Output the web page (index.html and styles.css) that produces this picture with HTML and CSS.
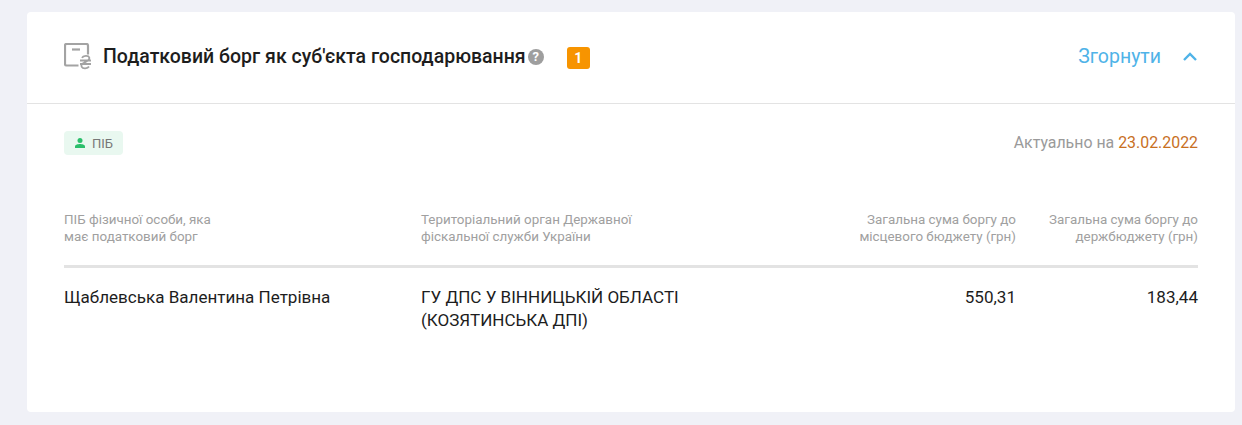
FILE: index.html
```html
<!DOCTYPE html>
<html lang="uk">
<head>
<meta charset="utf-8">
<title>Податковий борг</title>
<link rel="stylesheet" href="styles.css">
</head>
<body>
<section class="card">
  <header class="card-head">
    <div class="title-group">
      <svg class="doc-icon" width="28" height="27" viewBox="0 0 28 27" fill="none">
        <path d="M14.500 22.500H2.500A1.500 1.500 0 0 1 1 21V2.500A1.500 1.500 0 0 1 2.500 1h20A1.500 1.500 0 0 1 24 2.500V11.500" stroke="#a3a3a3" stroke-width="2.200"/>
        <path d="M8 6.500h8" stroke="#a3a3a3" stroke-width="2.200"/>
        <path d="M18 14.800c1-2.300 6.500-2.800 7.300-.2.700 2.400-2.700 3.900-4.800 4.900-2.100 1-3.900 2.300-2.800 4.400 1 2 6 1.800 7.300-.4M16 17.500h11M16 21h11" stroke="#a3a3a3" stroke-width="1.800"/>
      </svg>
      <h2 class="title">Податковий борг як суб'єкта господарювання</h2>
      <span class="help">?</span>
      <span class="count">1</span>
    </div>
    <button class="toggle">Згорнути
      <svg width="14" height="9" viewBox="0 0 14 9" fill="none"><path d="M1 8l6-6 6 6" stroke="#4fb3e8" stroke-width="2.400"/></svg>
    </button>
  </header>
  <div class="card-body">
    <div class="meta">
      <span class="tag">
        <svg width="10" height="10" viewBox="0 0 10 10"><circle cx="5" cy="2.600" r="2.500" fill="#2bbf6b"/><path d="M0 10V8.300C0 6.800 3 6 5 6s5 .8 5 2.300V10z" fill="#2bbf6b"/></svg>
        ПІБ
      </span>
      <span class="date">Актуально на <b>23.02.2022</b></span>
    </div>
    <div class="table">
      <div class="row head">
        <div>ПІБ фізичної особи, яка<br>має податковий борг</div>
        <div>Територіальний орган Державної<br>фіскальної служби України</div>
        <div class="num">Загальна сума боргу до<br>місцевого бюджету (грн)</div>
        <div class="num">Загальна сума боргу до<br>держбюджету (грн)</div>
      </div>
      <div class="row data">
        <div>Щаблевська Валентина Петрівна</div>
        <div>ГУ ДПС У ВІННИЦЬКІЙ ОБЛАСТІ<br>(КОЗЯТИНСЬКА ДПІ)</div>
        <div class="num">550,31</div>
        <div class="num">183,44</div>
      </div>
    </div>
  </div>
</section>
</body>
</html>
```
FILE: styles.css
```css
* { box-sizing: border-box; }
html, body { margin: 0; }
body {
  background: #f0f1f7;
  padding: 12px 7px 13px 27px;
  font-family: Roboto, "Liberation Sans", sans-serif;
  color: #1d1d1d;
}
.card {
  background: #fff;
  border-radius: 4px;
  height: 400px;
}
.card-head {
  height: 92px;
  border-bottom: 1px solid #e3e3e3;
  padding: 0 37px 2px;
  display: flex;
  align-items: center;
  justify-content: space-between;
}
.title-group { display: flex; align-items: center; }
.doc-icon { margin-right: 11px; }
.title { margin: 0; font-size: 19.500px; font-weight: 500; line-height: 24px; color: #1d1d1d; }
.help {
  width: 16px; height: 16px; border-radius: 50%;
  background: #9e9e9e; color: #fff;
  font-size: 13px; font-weight: 700; line-height: 16px; text-align: center;
  margin-left: 2px;
}
.count {
  margin: 2px 0 0 23px;
  width: 23px; height: 22px; border-radius: 3px;
  background: #f79400; color: #fff;
  font-size: 14px; font-weight: 700; line-height: 22px; text-align: center;
}
.toggle {
  border: 0; background: none; padding: 0 1px 0 0;
  font: 400 19.500px/24px Roboto, "Liberation Sans", sans-serif;
  color: #4fb3e8;
  display: flex; align-items: center; gap: 22px;
}
.card-body { padding: 27px 37px 0; }
.meta { display: flex; justify-content: space-between; align-items: center; height: 24px; }
.tag {
  display: inline-flex; align-items: center; gap: 7px;
  height: 24px; width: 59px; padding-left: 11px;
  background: #e9f8f0; border-radius: 4px;
  font-size: 13px; color: #777;
}
.date { font-size: 15.900px; line-height: 22px; color: #9a9a9a; }
.date b { font-weight: 400; color: #c8701f; }
.table { margin-top: 56px; }
.row {
  display: grid;
  grid-template-columns: 357px 1fr 237px 182px;
}
.row.head {
  font-size: 13.400px; line-height: 17px; color: #a0a0a0;
  height: 57px;
  border-bottom: 3px solid #e3e3e3;
}
.row.data {
  font-size: 17.050px; line-height: 23px; color: #1d1d1d;
  padding-top: 18px;
}
.num { text-align: right; }
```
